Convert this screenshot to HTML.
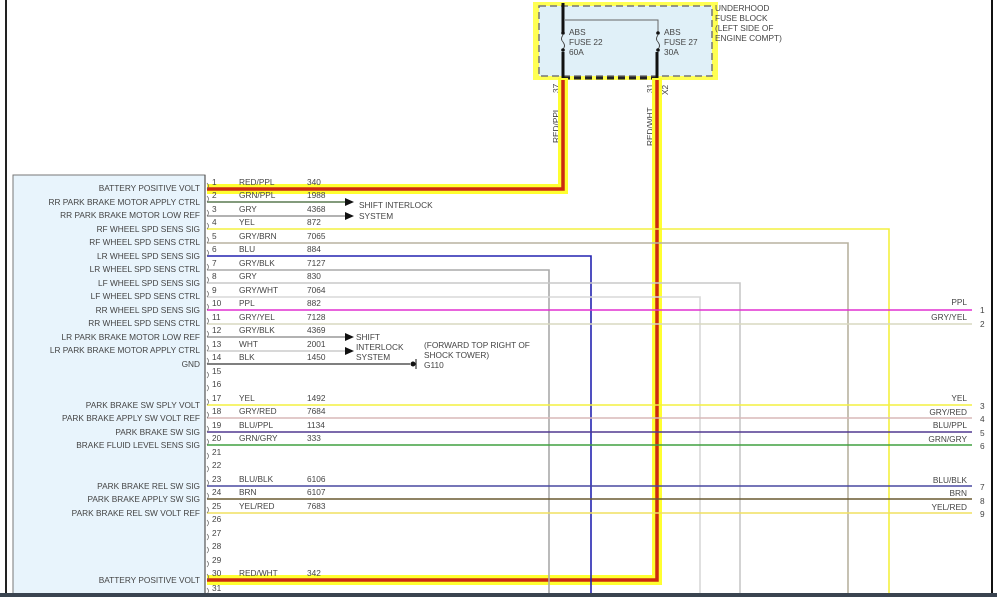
<!DOCTYPE html>
<html><head><meta charset="utf-8"><style>
html,body{margin:0;padding:0;background:#fff;width:997px;height:597px;overflow:hidden}
svg{display:block}
text{font-family:"Liberation Sans",sans-serif;font-size:8.3px;fill:#444}
</style></head><body>
<svg width="997" height="597" viewBox="0 0 997 597" xmlns="http://www.w3.org/2000/svg">
<rect x="5" y="0" width="2" height="597" fill="#222"/>
<rect x="991" y="0" width="2" height="597" fill="#111"/>
<rect x="13" y="175" width="192" height="420" fill="#e8f4fc" stroke="#777" stroke-width="1"/>
<line x1="205" y1="175" x2="205" y2="597" stroke="#555" stroke-width="1.2"/>

<!-- fuse block -->
<rect x="533" y="2" width="185" height="78" fill="#ffff40" opacity="0.9"/>
<rect x="539" y="6" width="173" height="70" fill="#e0f0f8" stroke="#777" stroke-width="1.5" stroke-dasharray="7,4"/>
<line x1="563" y1="78" x2="657" y2="78" stroke="#222" stroke-width="3" stroke-dasharray="7,4"/>
<line x1="563" y1="3" x2="563" y2="32" stroke="#111" stroke-width="3"/>
<line x1="563" y1="52" x2="563" y2="78" stroke="#111" stroke-width="3"/>
<polyline points="565,20 658,20 658,32" fill="none" stroke="#666" stroke-width="1"/>
<line x1="657" y1="52" x2="657" y2="78" stroke="#111" stroke-width="3"/>
<circle cx="563" cy="33" r="1.8" fill="#111"/><circle cx="563" cy="50" r="1.8" fill="#111"/>
<circle cx="658" cy="33" r="1.8" fill="#111"/><circle cx="658" cy="50" r="1.8" fill="#111"/>
<path d="M563 35 q-3 4 0 7 q3 4 0 7" fill="none" stroke="#333" stroke-width="0.8"/>
<path d="M658 35 q-3 4 0 7 q3 4 0 7" fill="none" stroke="#333" stroke-width="0.8"/>
<text x="569" y="35">ABS</text><text x="569" y="45">FUSE 22</text><text x="569" y="55">60A</text>
<text x="664" y="35">ABS</text><text x="664" y="45">FUSE 27</text><text x="664" y="55">30A</text>
<text x="715" y="11">UNDERHOOD</text><text x="715" y="21">FUSE BLOCK</text><text x="715" y="31">(LEFT SIDE OF</text><text x="715" y="41">ENGINE COMPT)</text>
<text transform="translate(559,93) rotate(-90)">37</text>
<text transform="translate(559,143) rotate(-90)">RED/PPL</text>
<text transform="translate(653,93) rotate(-90)">31</text>
<text transform="translate(668,95) rotate(-90)">X2</text>
<text transform="translate(653,146) rotate(-90)">RED/WHT</text>

<!-- highlighted power wires -->
<polyline points="207,189 563,189 563,78" fill="none" stroke="#ffff30" stroke-width="10"/>
<polyline points="207,580 657,580 657,78" fill="none" stroke="#ffff30" stroke-width="10"/>
<polyline points="207,189 563,189 563,80" fill="none" stroke="#cc2a10" stroke-width="3.5"/>
<polyline points="207,580 657,580 657,80" fill="none" stroke="#cc2a10" stroke-width="3.5"/>

<!-- wires -->
<g fill="none" stroke-width="1.6">
<line x1="207" y1="202" x2="345" y2="202" stroke="#5a7a50"/>
<line x1="207" y1="216" x2="345" y2="216" stroke="#999"/>
<polyline points="207,229 889,229 889,597" stroke="#f4f040"/>
<polyline points="207,243 848,243 848,597" stroke="#b8b2a0"/>
<polyline points="207,256 591,256 591,597" stroke="#2424b0"/>
<polyline points="207,270 549,270 549,597" stroke="#aaa"/>
<polyline points="207,283 740,283 740,597" stroke="#c8c8c8"/>
<polyline points="207,297 700,297 700,597" stroke="#d8d8d8"/>
<line x1="207" y1="310" x2="972" y2="310" stroke="#e030d0"/>
<line x1="207" y1="324" x2="972" y2="324" stroke="#d8d8c0"/>
<line x1="207" y1="337" x2="345" y2="337" stroke="#999"/>
<line x1="207" y1="351" x2="345" y2="351" stroke="#ccc"/>
<line x1="207" y1="364" x2="410" y2="364" stroke="#555"/>
<line x1="207" y1="405" x2="972" y2="405" stroke="#f4f040"/>
<line x1="207" y1="418" x2="972" y2="418" stroke="#d8b8b8"/>
<line x1="207" y1="432" x2="972" y2="432" stroke="#503890"/>
<line x1="207" y1="445" x2="972" y2="445" stroke="#40a040"/>
<line x1="207" y1="486" x2="972" y2="486" stroke="#4848a0"/>
<line x1="207" y1="499" x2="972" y2="499" stroke="#6a5a30"/>
<line x1="207" y1="513" x2="972" y2="513" stroke="#f0e060"/>
</g>
<g fill="none" stroke="#666" stroke-width="0.7">
<path d="M207 183 q3 3 0 6 M207 196 q3 3 0 6 M207 210 q3 3 0 6 M207 223 q3 3 0 6 M207 237 q3 3 0 6 M207 250 q3 3 0 6 M207 264 q3 3 0 6 M207 277 q3 3 0 6 M207 291 q3 3 0 6 M207 304 q3 3 0 6 M207 318 q3 3 0 6 M207 331 q3 3 0 6 M207 345 q3 3 0 6 M207 358 q3 3 0 6 M207 372 q3 3 0 6 M207 385 q3 3 0 6 M207 399 q3 3 0 6 M207 412 q3 3 0 6 M207 426 q3 3 0 6 M207 439 q3 3 0 6 M207 453 q3 3 0 6 M207 466 q3 3 0 6 M207 480 q3 3 0 6 M207 493 q3 3 0 6 M207 507 q3 3 0 6 M207 520 q3 3 0 6 M207 534 q3 3 0 6 M207 547 q3 3 0 6 M207 561 q3 3 0 6 M207 574 q3 3 0 6 M207 588 q3 3 0 6"/>
</g>
<path d="M345 198 l9 4 l-9 4z M345 212 l9 4 l-9 4z M345 333 l9 4 l-9 4z M345 347 l9 4 l-9 4z" fill="#111"/>
<circle cx="413" cy="364" r="2.5" fill="#111"/><line x1="416" y1="359" x2="416" y2="369" stroke="#111"/>
<text x="359" y="208">SHIFT INTERLOCK</text><text x="359" y="219">SYSTEM</text>
<text x="356" y="340">SHIFT</text><text x="356" y="350">INTERLOCK</text><text x="356" y="360">SYSTEM</text>
<text x="424" y="348">(FORWARD TOP RIGHT OF</text><text x="424" y="358">SHOCK TOWER)</text>
<text x="424" y="368">G110</text>

<!-- left labels -->
<g text-anchor="end">
<text x="200" y="191">BATTERY POSITIVE VOLT</text>
<text x="200" y="205">RR PARK BRAKE MOTOR APPLY CTRL</text>
<text x="200" y="218">RR PARK BRAKE MOTOR LOW REF</text>
<text x="200" y="232">RF WHEEL SPD SENS SIG</text>
<text x="200" y="245">RF WHEEL SPD SENS CTRL</text>
<text x="200" y="259">LR WHEEL SPD SENS SIG</text>
<text x="200" y="272">LR WHEEL SPD SENS CTRL</text>
<text x="200" y="286">LF WHEEL SPD SENS SIG</text>
<text x="200" y="299">LF WHEEL SPD SENS CTRL</text>
<text x="200" y="313">RR WHEEL SPD SENS SIG</text>
<text x="200" y="326">RR WHEEL SPD SENS CTRL</text>
<text x="200" y="340">LR PARK BRAKE MOTOR LOW REF</text>
<text x="200" y="353">LR PARK BRAKE MOTOR APPLY CTRL</text>
<text x="200" y="367">GND</text>
<text x="200" y="408">PARK BRAKE SW SPLY VOLT</text>
<text x="200" y="421">PARK BRAKE APPLY SW VOLT REF</text>
<text x="200" y="435">PARK BRAKE SW SIG</text>
<text x="200" y="448">BRAKE FLUID LEVEL SENS SIG</text>
<text x="200" y="489">PARK BRAKE REL SW SIG</text>
<text x="200" y="502">PARK BRAKE APPLY SW SIG</text>
<text x="200" y="516">PARK BRAKE REL SW VOLT REF</text>
<text x="200" y="583">BATTERY POSITIVE VOLT</text>
<text x="967" y="305">PPL</text><text x="967" y="320">GRY/YEL</text>
<text x="967" y="401">YEL</text><text x="967" y="415">GRY/RED</text><text x="967" y="428">BLU/PPL</text><text x="967" y="442">GRN/GRY</text>
<text x="967" y="483">BLU/BLK</text><text x="967" y="496">BRN</text><text x="967" y="510">YEL/RED</text>
</g>
<g>
<text x="980" y="313">1</text><text x="980" y="327">2</text><text x="980" y="409">3</text><text x="980" y="422">4</text><text x="980" y="436">5</text><text x="980" y="449">6</text><text x="980" y="490">7</text><text x="980" y="504">8</text><text x="980" y="517">9</text>
</g>

<!-- pin columns -->
<g>
<text x="212" y="185">1</text><text x="239" y="185">RED/PPL</text><text x="307" y="185">340</text>
<text x="212" y="198">2</text><text x="239" y="198">GRN/PPL</text><text x="307" y="198">1988</text>
<text x="212" y="212">3</text><text x="239" y="212">GRY</text><text x="307" y="212">4368</text>
<text x="212" y="225">4</text><text x="239" y="225">YEL</text><text x="307" y="225">872</text>
<text x="212" y="239">5</text><text x="239" y="239">GRY/BRN</text><text x="307" y="239">7065</text>
<text x="212" y="252">6</text><text x="239" y="252">BLU</text><text x="307" y="252">884</text>
<text x="212" y="266">7</text><text x="239" y="266">GRY/BLK</text><text x="307" y="266">7127</text>
<text x="212" y="279">8</text><text x="239" y="279">GRY</text><text x="307" y="279">830</text>
<text x="212" y="293">9</text><text x="239" y="293">GRY/WHT</text><text x="307" y="293">7064</text>
<text x="212" y="306">10</text><text x="239" y="306">PPL</text><text x="307" y="306">882</text>
<text x="212" y="320">11</text><text x="239" y="320">GRY/YEL</text><text x="307" y="320">7128</text>
<text x="212" y="333">12</text><text x="239" y="333">GRY/BLK</text><text x="307" y="333">4369</text>
<text x="212" y="347">13</text><text x="239" y="347">WHT</text><text x="307" y="347">2001</text>
<text x="212" y="360">14</text><text x="239" y="360">BLK</text><text x="307" y="360">1450</text>
<text x="212" y="374">15</text>
<text x="212" y="387">16</text>
<text x="212" y="401">17</text><text x="239" y="401">YEL</text><text x="307" y="401">1492</text>
<text x="212" y="414">18</text><text x="239" y="414">GRY/RED</text><text x="307" y="414">7684</text>
<text x="212" y="428">19</text><text x="239" y="428">BLU/PPL</text><text x="307" y="428">1134</text>
<text x="212" y="441">20</text><text x="239" y="441">GRN/GRY</text><text x="307" y="441">333</text>
<text x="212" y="455">21</text>
<text x="212" y="468">22</text>
<text x="212" y="482">23</text><text x="239" y="482">BLU/BLK</text><text x="307" y="482">6106</text>
<text x="212" y="495">24</text><text x="239" y="495">BRN</text><text x="307" y="495">6107</text>
<text x="212" y="509">25</text><text x="239" y="509">YEL/RED</text><text x="307" y="509">7683</text>
<text x="212" y="522">26</text>
<text x="212" y="536">27</text>
<text x="212" y="549">28</text>
<text x="212" y="563">29</text>
<text x="212" y="576">30</text><text x="239" y="576">RED/WHT</text><text x="307" y="576">342</text>
<text x="212" y="591">31</text>
</g>
<rect x="0" y="593" width="997" height="4" fill="#3a4450"/>
</svg>
</body></html>
